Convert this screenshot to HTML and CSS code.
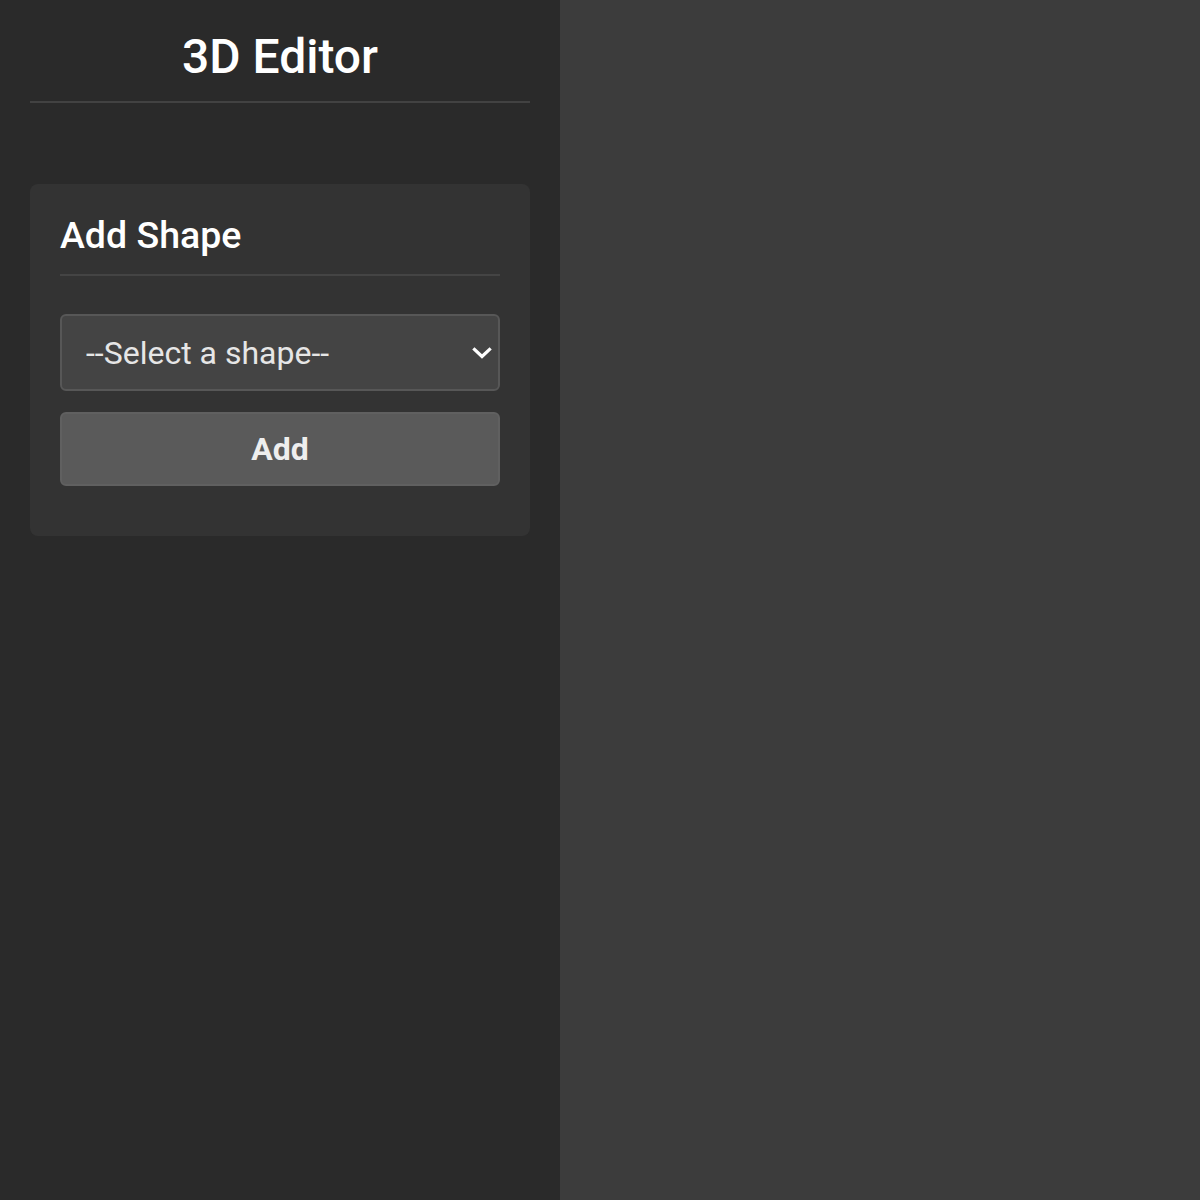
FILE: index.html
```html
<!DOCTYPE html>
<html lang="en">
<head>
<meta charset="utf-8">
<title>3D Editor</title>
<link rel="stylesheet" href="styles.css">
</head>
<body>
<div class="app">
  <aside class="sidebar">
    <h1 class="title">3D Editor</h1>
    <section class="card">
      <h2 class="card-title">Add Shape</h2>
      <div class="select-wrap">
        <select class="shape-select">
          <option>--Select a shape--</option>
          <option>Cube</option>
          <option>Sphere</option>
          <option>Cylinder</option>
        </select>
        <svg class="chevron" width="20" height="14" viewBox="0 0 20 14" aria-hidden="true">
          <path d="M2.5 3.5 L10 10.5 L17.5 3.5" fill="none" stroke="#ffffff" stroke-width="3.2" stroke-linecap="square" stroke-linejoin="miter"/>
        </svg>
      </div>
      <button class="add-btn" type="button">Add</button>
    </section>
  </aside>
  <main class="viewport"></main>
</div>
</body>
</html>
```
FILE: styles.css
```css
html, body {
  margin: 0;
  padding: 0;
  height: 100%;
}
body {
  font-family: Roboto, "Liberation Sans", sans-serif;
  background: #3c3c3c;
  color: #ffffff;
}
.app {
  display: flex;
  height: 1200px;
}
.sidebar {
  width: 560px;
  box-sizing: border-box;
  background: #2a2a2a;
  padding: 29px 30px 30px;
  display: flex;
  flex-direction: column;
}
.title {
  margin: 0;
  font-size: 48px;
  line-height: 56px;
  font-weight: 500;
  text-align: center;
  color: #ffffff;
  padding-bottom: 16px;
  border-bottom: 2px solid #424242;
}
.card {
  margin-top: 81px;
  background: #333333;
  border-radius: 8px;
  padding: 29px 30px 50px;
  display: flex;
  flex-direction: column;
}
.card-title {
  margin: 0;
  font-size: 37.5px;
  line-height: 44px;
  font-weight: 500;
  color: #ffffff;
  padding-bottom: 17px;
  border-bottom: 2px solid #444444;
}
.select-wrap {
  position: relative;
  margin-top: 38px;
}
.shape-select {
  display: block;
  width: 100%;
  height: 77px;
  box-sizing: border-box;
  appearance: none;
  -webkit-appearance: none;
  background: #444444;
  border: 2px solid #575757;
  border-radius: 6px;
  color: #e6e6e6;
  font-family: Roboto, "Liberation Sans", sans-serif;
  font-size: 32px;
  padding: 1px 50px 0 24px;
  outline: none;
}
.chevron {
  position: absolute;
  right: 8px;
  top: 32px;
  pointer-events: none;
}
.add-btn {
  margin-top: 21px;
  height: 74px;
  width: 100%;
  box-sizing: border-box;
  background: #5a5a5a;
  border: 2px solid #606060;
  border-radius: 6px;
  color: #eeeeee;
  font-family: Roboto, "Liberation Sans", sans-serif;
  font-size: 32px;
  font-weight: 700;
  cursor: pointer;
}
.viewport {
  flex: 1;
  background: #3c3c3c;
}
```
